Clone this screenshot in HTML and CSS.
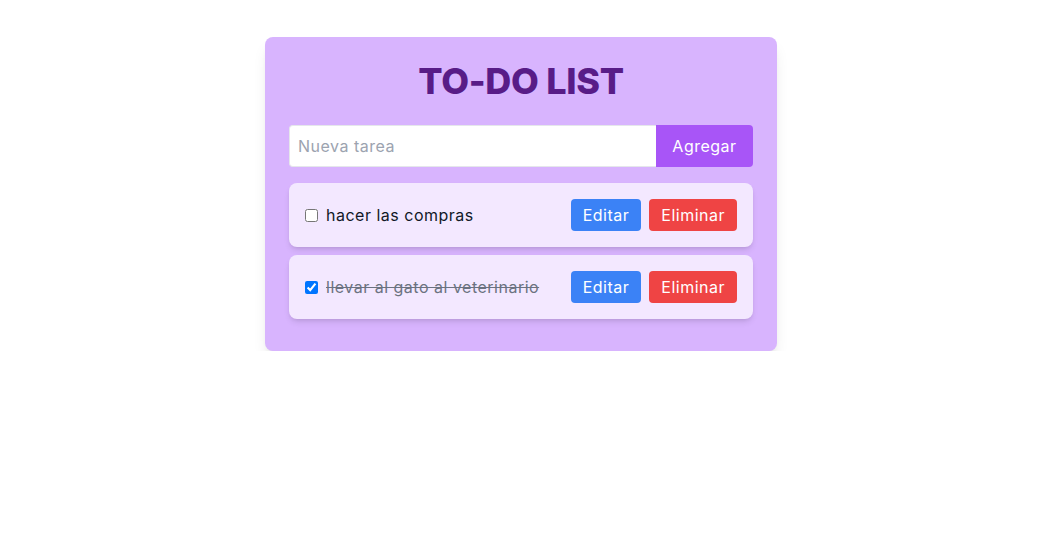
FILE: index.html
```html
<!DOCTYPE html>
<html lang="es">
<head>
<meta charset="utf-8">
<title>To-Do List</title>
<link rel="stylesheet" href="styles.css">
</head>
<body>
<main class="card">
  <h1 class="title">TO-DO LIST</h1>
  <form class="add-form">
    <input class="add-input" type="text" placeholder="Nueva tarea">
    <button class="add-btn" type="button">Agregar</button>
  </form>
  <ul class="list">
    <li class="item">
      <label class="item-label">
        <input class="check" type="checkbox">
        <span class="item-text">hacer las compras</span>
      </label>
      <div class="actions">
        <button class="btn btn-edit" type="button">Editar</button>
        <button class="btn btn-delete" type="button">Eliminar</button>
      </div>
    </li>
    <li class="item">
      <label class="item-label">
        <input class="check" type="checkbox" checked>
        <span class="item-text done">llevar al gato al veterinario</span>
      </label>
      <div class="actions">
        <button class="btn btn-edit" type="button">Editar</button>
        <button class="btn btn-delete" type="button">Eliminar</button>
      </div>
    </li>
  </ul>
</main>
</body>
</html>
```
FILE: styles.css
```css
* { box-sizing: border-box; }
html, body { margin: 0; padding: 0; background: #ffffff; }
body {
  font-family: "Inter", "Noto Sans", sans-serif;
  font-size: 16px;
  letter-spacing: 0.5px;
  color: #111827;
  padding: 37px 0 0 3px;
}
.card {
  width: 512px;
  margin: 0 auto;
  background: #d8b4fe;
  border-radius: 8px;
  padding: 24px 24px 24px;
  box-shadow: 0 10px 15px -3px rgba(0,0,0,0.1), 0 4px 6px -4px rgba(0,0,0,0.1);
}
.title {
  margin: 0 0 24px;
  text-align: center;
  font-size: 36px;
  line-height: 40px;
  font-weight: 800;
  letter-spacing: -0.3px;
  color: #581c87;
}
.add-form {
  display: flex;
  margin-bottom: 16px;
}
.add-input {
  flex: 1;
  height: 42px;
  border: 1px solid #e5e7eb;
  border-right: none;
  border-radius: 4px 0 0 4px;
  padding: 8px;
  font: inherit;
  letter-spacing: inherit;
  color: #111827;
  outline: none;
}
.add-input::placeholder { color: #9ca3af; }
.add-btn {
  width: 97px;
  height: 42px;
  border: none;
  border-radius: 0 4px 4px 0;
  background: #a855f7;
  color: #ffffff;
  font: inherit;
  letter-spacing: inherit;
}
.list {
  list-style: none;
  margin: 0 0 8px;
  padding: 0;
  display: flex;
  flex-direction: column;
  gap: 8px;
}
.item {
  display: flex;
  align-items: center;
  justify-content: space-between;
  height: 64px;
  padding: 0 16px;
  background: #f3e8ff;
  border-radius: 8px;
  box-shadow: 0 4px 6px -1px rgba(0,0,0,0.1), 0 2px 4px -2px rgba(0,0,0,0.1);
}
.item-label {
  display: flex;
  align-items: center;
}
.check {
  width: 13px;
  height: 13px;
  margin: 0 8px 0 0;
}
.item-text { color: #111827; }
.item-text.done { color: #6b7280; text-decoration: line-through; }
.actions { display: flex; gap: 8px; }
.btn {
  height: 32px;
  padding: 0 12px;
  border: none;
  border-radius: 4px;
  color: #ffffff;
  font: inherit;
  letter-spacing: inherit;
}
.btn-edit { background: #3b82f6; }
.btn-delete { background: #ef4444; }
```
